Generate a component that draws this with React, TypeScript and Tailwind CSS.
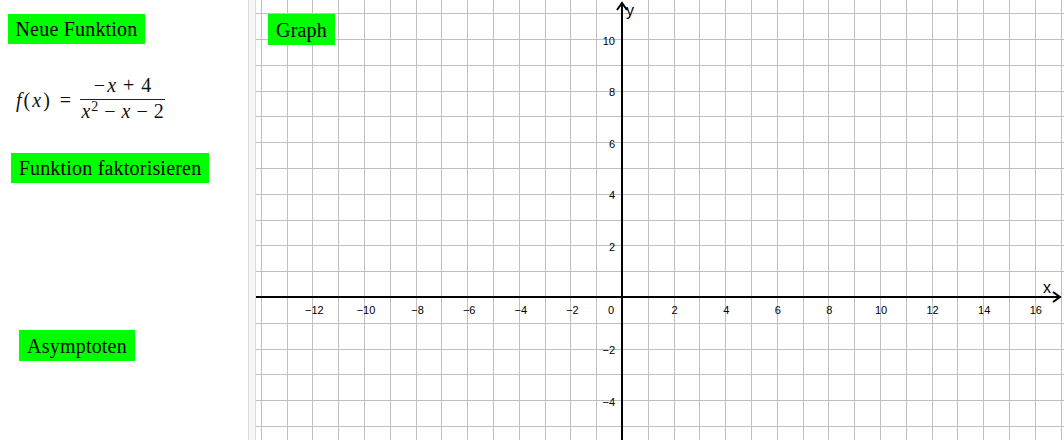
import React from "react";

const U = 25.8;
const OX = 366;
const OY = 297;
const W = 808;
const H = 440;

const serif = { fontFamily: '"Liberation Serif", "DejaVu Serif", serif' };
const sans = '"Liberation Sans", Arial, sans-serif';

function range(a: number, b: number) {
  const out: number[] = [];
  for (let i = a; i <= b; i++) out.push(i);
  return out;
}

function fmt(n: number) {
  return n < 0 ? "\u2212" + Math.abs(n) : String(n);
}

function GreenButton({ label, className }: { label: string; className?: string }) {
  return (
    <div
      className={
        "inline-flex items-center justify-center bg-[#00ff00] text-black text-[20px] leading-none tracking-[0.2px] whitespace-nowrap " +
        (className ?? "")
      }
      style={serif}
    >
      {label}
    </div>
  );
}

function Formula() {
  return (
    <div className="flex items-center text-[20px] text-[#111]" style={serif}>
      <span className="tracking-[2px]">
        <span className="italic">f</span>(<span className="italic">x</span>)
      </span>
      <span className="ml-[8px] mr-[9px]">=</span>
      <div className="flex flex-col items-center">
        <div className="h-[23px] leading-[19px] px-[1px]">
          <span className="mr-[2px]">−</span>
          <span className="italic">x</span>
          <span className="mx-[7px]">+</span>
          <span>4</span>
        </div>
        <div className="h-[1px] w-[85px] bg-[#222]" />
        <div className="h-[24px] pt-[2px] leading-[19px] px-[1px]">
          <span className="italic">x</span>
          <sup className="text-[14px] ml-[1px]">2</sup>
          <span className="mx-[6px]">−</span>
          <span className="italic">x</span>
          <span className="mx-[6px]">−</span>
          <span>2</span>
        </div>
      </div>
    </div>
  );
}

function Graph() {
  const vx = range(-14, 17).filter((k) => k !== 0);
  const hy = range(-5, 11).filter((k) => k !== 0);
  const xl = range(-6, 8).map((k) => k * 2).filter((k) => k !== 0);
  const yl = range(-2, 5).map((k) => k * 2).filter((k) => k !== 0);
  const px = (k: number) => Math.round(OX + k * U) + 0.5;
  const py = (k: number) => Math.round(OY - k * U) + 0.5;

  return (
    <svg width={W} height={H} className="block">
      <g stroke="#c0c0c0" strokeWidth={1} shapeRendering="crispEdges">
        {vx.map((k) => (
          <line key={"v" + k} x1={px(k)} y1={0} x2={px(k)} y2={H} />
        ))}
        {hy.map((k) => (
          <line key={"h" + k} x1={0} y1={py(k)} x2={W} y2={py(k)} />
        ))}
      </g>
      <g stroke="#000" strokeWidth={2} fill="none">
        <line x1={0} y1={OY} x2={804} y2={OY} />
        <polyline points={`797,${OY - 5} 804,${OY} 797,${OY + 5}`} />
        <line x1={OX} y1={3} x2={OX} y2={H} />
        <polyline points={`${OX - 5},10 ${OX},3 ${OX + 5},10`} />
      </g>
      <g fontFamily={sans} fontSize={11} fill="#000">
        {xl.map((k) => (
          <text key={"xl" + k} x={OX + k * U + (k < 0 ? 2 : 1)} y={314} textAnchor="middle">
            {fmt(k)}
          </text>
        ))}
        {yl.map((k) => (
          <text key={"yl" + k} x={359} y={OY - k * U + 5.5} textAnchor="end">
            {fmt(k)}
          </text>
        ))}
        <text x={358} y={314} textAnchor="end">
          0
        </text>
      </g>
      <g fontFamily={sans} fontSize={16} fill="#000">
        <text x={787} y={293}>
          x
        </text>
        <text x={370} y={16}>
          y
        </text>
      </g>
    </svg>
  );
}

export default function App() {
  return (
    <div className="flex w-[1064px] h-[440px] overflow-hidden bg-white">
      <div className="w-[248px] shrink-0 flex flex-col items-start">
        <GreenButton label="Neue Funktion" className="mt-[14px] ml-[8px] h-[30px] w-[137px]" />
        <div className="mt-[32px] ml-[16px]">
          <Formula />
        </div>
        <GreenButton label="Funktion faktorisieren" className="mt-[29px] ml-[11px] h-[30px] w-[198px]" />
        <GreenButton label="Asymptoten" className="mt-[147px] ml-[19px] h-[31px] w-[116px]" />
      </div>
      <div className="w-[8px] shrink-0 bg-[#f7f7f7] border-l border-r border-[#dcdcdc]" />
      <div className="relative flex-1">
        <Graph />
        <div className="absolute left-[12px] top-[14px]">
          <GreenButton label="Graph" className="h-[31px] w-[67px]" />
        </div>
      </div>
    </div>
  );
}
